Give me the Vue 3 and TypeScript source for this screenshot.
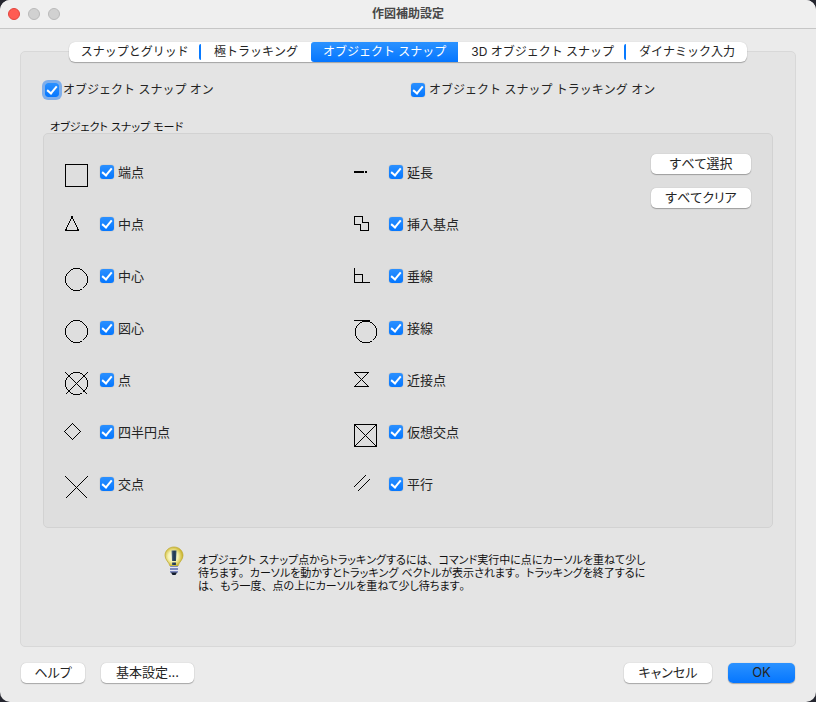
<script setup lang="ts">
import { ref } from 'vue'

type IconName =
  | 'endpoint' | 'midpoint' | 'center' | 'centroid' | 'node' | 'quadrant' | 'intersection'
  | 'extension' | 'insertion' | 'perpendicular' | 'tangent' | 'nearest' | 'apparent' | 'parallel'

interface SnapMode {
  id: IconName
  label: string
  path: string
  on: boolean
}

const circle = 'M9.5 2.5H15.5L18.5 4.5L21.5 7.5L23.5 10.5V16.5L21.5 19.5L18.5 22.5L15.5 24.5H9.5L6.5 22.5L3.5 19.5L1.5 16.5V10.5L3.5 7.5L6.5 4.5Z'
const cross = 'M1.5 2.5L23.5 24.5M23.5 2.5L1.5 24.5'
const square = 'M1.5 2.5H23.5V24.5H1.5Z'

const columns = ref<SnapMode[][]>([
  [
    { id: 'endpoint', label: '端点', path: square, on: true },
    { id: 'midpoint', label: '中点', path: 'M8 2.5L14.5 16.5H1.5Z', on: true },
    { id: 'center', label: '中心', path: circle, on: true },
    { id: 'centroid', label: '図心', path: circle, on: true },
    { id: 'node', label: '点', path: circle + cross, on: true },
    { id: 'quadrant', label: '四半円点', path: 'M8.5 1.5L16.5 9.5L8.5 17.5L0.5 9.5Z', on: true },
    { id: 'intersection', label: '交点', path: cross, on: true },
  ],
  [
    { id: 'extension', label: '延長', path: 'M1 9.5H11M1 10.5H11M12 9.5H14M12 10.5H14', on: true },
    { id: 'insertion', label: '挿入基点', path: 'M1.5 2.5H9.5V8.5H15.5V16.5H7.5V10.5H1.5Z', on: true },
    { id: 'perpendicular', label: '垂線', path: 'M1.5 2V16.5H17M1.5 8.5H9.5V16.5', on: true },
    { id: 'tangent', label: '接線', path: 'M1 2.5H17M9.5 3.5H16.5L19.5 5.5L21.5 7.5L23.5 10.5V17.5L21.5 20.5L19.5 22.5L16.5 24.5H9.5L6.5 22.5L4.5 20.5L2.5 17.5V10.5L4.5 7.5L6.5 5.5Z', on: true },
    { id: 'nearest', label: '近接点', path: 'M1.5 2.5H15.5L1.5 16.5H15.5Z', on: true },
    { id: 'apparent', label: '仮想交点', path: square + cross, on: true },
    { id: 'parallel', label: '平行', path: 'M1 13L13 1M5 17L17 5', on: true },
  ],
])

const tabs = ['スナップとグリッド', '極トラッキング', 'オブジェクト スナップ', '3D オブジェクト スナップ', 'ダイナミック入力']
const activeTab = ref(2)
const snapOn = ref(true)
const trackingOn = ref(true)

// Each line is split around its punctuation, which keeps a full-width advance.
const hintLines = [
  'オブジェクト スナップ点からトラッキングするには、コマンド実行中に点にカーソルを重ねて少し',
  '待ちます。カーソルを動かすとトラッキング ベクトルが表示されます。トラッキングを終了するに',
  'は、もう一度、点の上にカーソルを重ねて少し待ちます。',
].map(line => line.split(/([、。])/).filter(Boolean))

function setAll(on: boolean) {
  columns.value.forEach(column => column.forEach(mode => { mode.on = on }))
}
</script>

<template>
  <div class="window">
    <header class="titlebar">
      <div class="lights">
        <button class="light close" aria-label="閉じる"></button>
        <button class="light" aria-label="しまう"></button>
        <button class="light" aria-label="拡大"></button>
      </div>
      <h1>作図補助設定</h1>
    </header>

    <main class="pane">
      <nav class="tabs" role="tablist">
        <button
          v-for="(tab, i) in tabs"
          :key="tab"
          role="tab"
          :aria-selected="i === activeTab"
          :class="['tab', { active: i === activeTab, divided: i !== activeTab && i + 1 !== activeTab && i < tabs.length - 1 }]"
          @click="activeTab = i"
        >{{ tab }}</button>
      </nav>

      <div class="switches">
        <label class="check focused"><input v-model="snapOn" type="checkbox"><span>オブジェクト スナップ オン</span></label>
        <label class="check"><input v-model="trackingOn" type="checkbox"><span>オブジェクト スナップ トラッキング オン</span></label>
      </div>

      <h2>オブジェクト スナップ モード</h2>
      <section class="group">
        <div v-for="(column, c) in columns" :key="c">
          <div v-for="mode in column" :key="mode.id" class="mode">
            <svg width="28" height="28" viewBox="0 0 28 28" aria-hidden="true"><path :d="mode.path" /></svg>
            <label class="check"><input v-model="mode.on" type="checkbox"><span>{{ mode.label }}</span></label>
          </div>
        </div>
        <div class="actions">
          <button class="push" @click="setAll(true)">すべて選択</button>
          <button class="push" @click="setAll(false)">すべてクリア</button>
        </div>
      </section>

      <div class="hint">
        <svg class="bulb" width="20" height="30" viewBox="0 0 20 30" aria-hidden="true">
          <defs>
            <radialGradient id="glass" cx="45%" cy="50%" r="55%">
              <stop offset="0" stop-color="#fffff4" />
              <stop offset="0.5" stop-color="#f5f1b0" />
              <stop offset="1" stop-color="#c8b020" />
            </radialGradient>
            <linearGradient id="mark" x1="0" x2="1" y1="0" y2="0">
              <stop offset="0" stop-color="#5a7186" />
              <stop offset="0.5" stop-color="#1f3550" />
              <stop offset="1" stop-color="#34506a" />
            </linearGradient>
          </defs>
          <path d="M10 1C4.800 1 1 4.800 1 9.500C1 14 5 16 6 20H14C15 16 19 14 19 9.500C19 4.800 15.200 1 10 1Z" fill="url(#glass)" stroke="#c0ad3c" stroke-width="0.800" />
          <path d="M7.500 4.500H12.500L12 15H8ZM8 16.500H12V19H8Z" fill="url(#mark)" />
          <rect x="6" y="20" width="8" height="7" rx="1" fill="#7d88bd" />
          <path d="M6 21.500H14M6 24.500H14" stroke="#e4e6f3" stroke-width="1" />
          <path d="M7 26.500H13L11.500 29H8.500Z" fill="#111b2b" />
        </svg>
        <p>
          <span v-for="(line, l) in hintLines" :key="l" class="line"><span v-for="(part, p) in line" :key="p" :class="{ stop: part.length === 1 && '、。'.includes(part) }">{{ part }}</span></span>
        </p>
      </div>
    </main>

    <footer class="footer">
      <button class="push help">ヘルプ</button>
      <button class="push options">基本設定...</button>
      <span class="spacer"></span>
      <button class="push cancel">キャンセル</button>
      <button class="push primary">OK</button>
    </footer>
  </div>
</template>

<style>
body {
  margin: 0;
  background: #25262f;
}
</style>

<style scoped>
.window {
  box-sizing: border-box;
  min-height: 100vh;
  display: flex;
  flex-direction: column;
  background: #ebebeb;
  border-radius: 10px;
  overflow: hidden;
  color: #242424;
  font: 13px/20px Inter, "Noto Sans CJK JP", sans-serif;
  font-feature-settings: "palt";
  font-kerning: none;
}
button {
  font: inherit;
  font-feature-settings: inherit;
  font-kerning: inherit;
  color: inherit;
  border: 0;
  padding: 0;
  white-space: nowrap;
}
.titlebar {
  box-sizing: border-box;
  height: 29px;
  display: grid;
  grid-template-columns: 1fr auto 1fr;
  align-items: center;
  padding: 0 8px;
  background: #efefef;
  border-bottom: 1px solid #c6c6c6;
}
.lights {
  display: flex;
  gap: 8px;
}
.light {
  width: 12px;
  height: 12px;
  border-radius: 50%;
  background: #d1d1d1;
  border: 1px solid #b9b9b9;
}
.light.close {
  background: #ff5b52;
  border-color: #e2443d;
}
h1 {
  margin: 0;
  font-size: 12px;
  font-weight: 700;
  color: #484848;
}
.pane {
  flex: 1;
  margin: 22px 20px 0;
  padding: 0 22px;
  background: #e4e4e4;
  border: 1px solid #d8d8d8;
  border-radius: 5px;
}
.tabs {
  display: flex;
  gap: 1px;
  width: max-content;
  margin: -10px auto 0;
  background: #fff;
  border-radius: 6px;
  box-shadow: 0 1px 1px #00000045, 0 0 1px #00000030;
  font-size: 12px;
  font-feature-settings: normal;
}
.tab {
  position: relative;
  height: 20px;
  padding: 0 12px;
  background: transparent;
}
.tab.active {
  color: #fff;
  background: linear-gradient(#2b92ff, #0576ff);
  border-radius: 3px 0 0 3px;
}
.tab.divided::after {
  content: "";
  position: absolute;
  top: 2px;
  right: 0;
  width: 2px;
  height: 16px;
  border-radius: 2px 0 0 2px;
  background: #087aff;
}
.switches {
  display: grid;
  grid-template-columns: 1fr 1fr;
  column-gap: 4px;
  padding: 18px 0 0 2px;
  font-size: 12px;
  font-feature-settings: normal;
}
.check {
  display: inline-flex;
  align-items: center;
  justify-self: start;
  gap: 4px;
  height: 20px;
  white-space: nowrap;
}
.check input {
  appearance: none;
  flex: none;
  width: 14px;
  height: 14px;
  margin: 0;
  border-radius: 3px;
  background: #fff;
  box-shadow: 0 0 1px #0006;
  display: grid;
  place-items: center;
}
.check input:checked {
  background: linear-gradient(#2b90ff, #0577ff);
}
.check input:checked::before {
  content: "";
  width: 4px;
  height: 8px;
  margin-bottom: 2px;
  border: solid #fff;
  border-width: 0 2px 2px 0;
  transform: rotate(40deg);
}
.check.focused input {
  box-shadow: 0 0 0 3px #7faeea;
}
h2 {
  margin: 22px 0 0 7px;
  font-size: 11px;
  line-height: 11px;
  font-weight: 400;
  color: #111;
}
.group {
  display: grid;
  grid-template-columns: 1fr 1fr 109px;
  padding: 12px 21px 17px 20px;
  background: #dedede;
  border: 1px solid #d2d2d2;
  border-radius: 5px;
}
.mode {
  box-sizing: border-box;
  display: flex;
  align-items: flex-start;
  gap: 8px;
  height: 52px;
  padding-top: 16px;
}
.mode svg {
  flex: none;
  fill: none;
  stroke: #000;
  stroke-width: 1;
  shape-rendering: crispEdges;
}
.actions {
  display: flex;
  flex-direction: column;
  align-items: flex-end;
  gap: 14px;
  padding-top: 8px;
}
.actions .push {
  width: 100px;
}
.push {
  box-sizing: border-box;
  height: 20px;
  line-height: 18px;
  padding-bottom: 2px;
  border-radius: 5px;
  background: #fff;
  box-shadow: 0 1px 1px #00000045, 0 0 1px #00000040;
}
.primary {
  background: linear-gradient(#2b92ff, #0576ff);
}
.hint {
  display: flex;
  gap: 14px;
  padding: 18px 100px 50px 121px;
}
.bulb {
  flex: none;
}
.hint p {
  margin: 8px 0 0;
  font-size: 11px;
  line-height: 13px;
  color: #111;
}
.line {
  display: block;
}
.stop {
  font-feature-settings: normal;
}
.footer {
  display: flex;
  padding: 16px 21px 19px;
}
.help {
  width: 64px;
}
.options {
  width: 93px;
  margin-left: 16px;
}
.spacer {
  flex: 1;
}
.cancel {
  width: 88px;
}
.footer .primary {
  width: 67px;
  margin-left: 16px;
}
</style>
